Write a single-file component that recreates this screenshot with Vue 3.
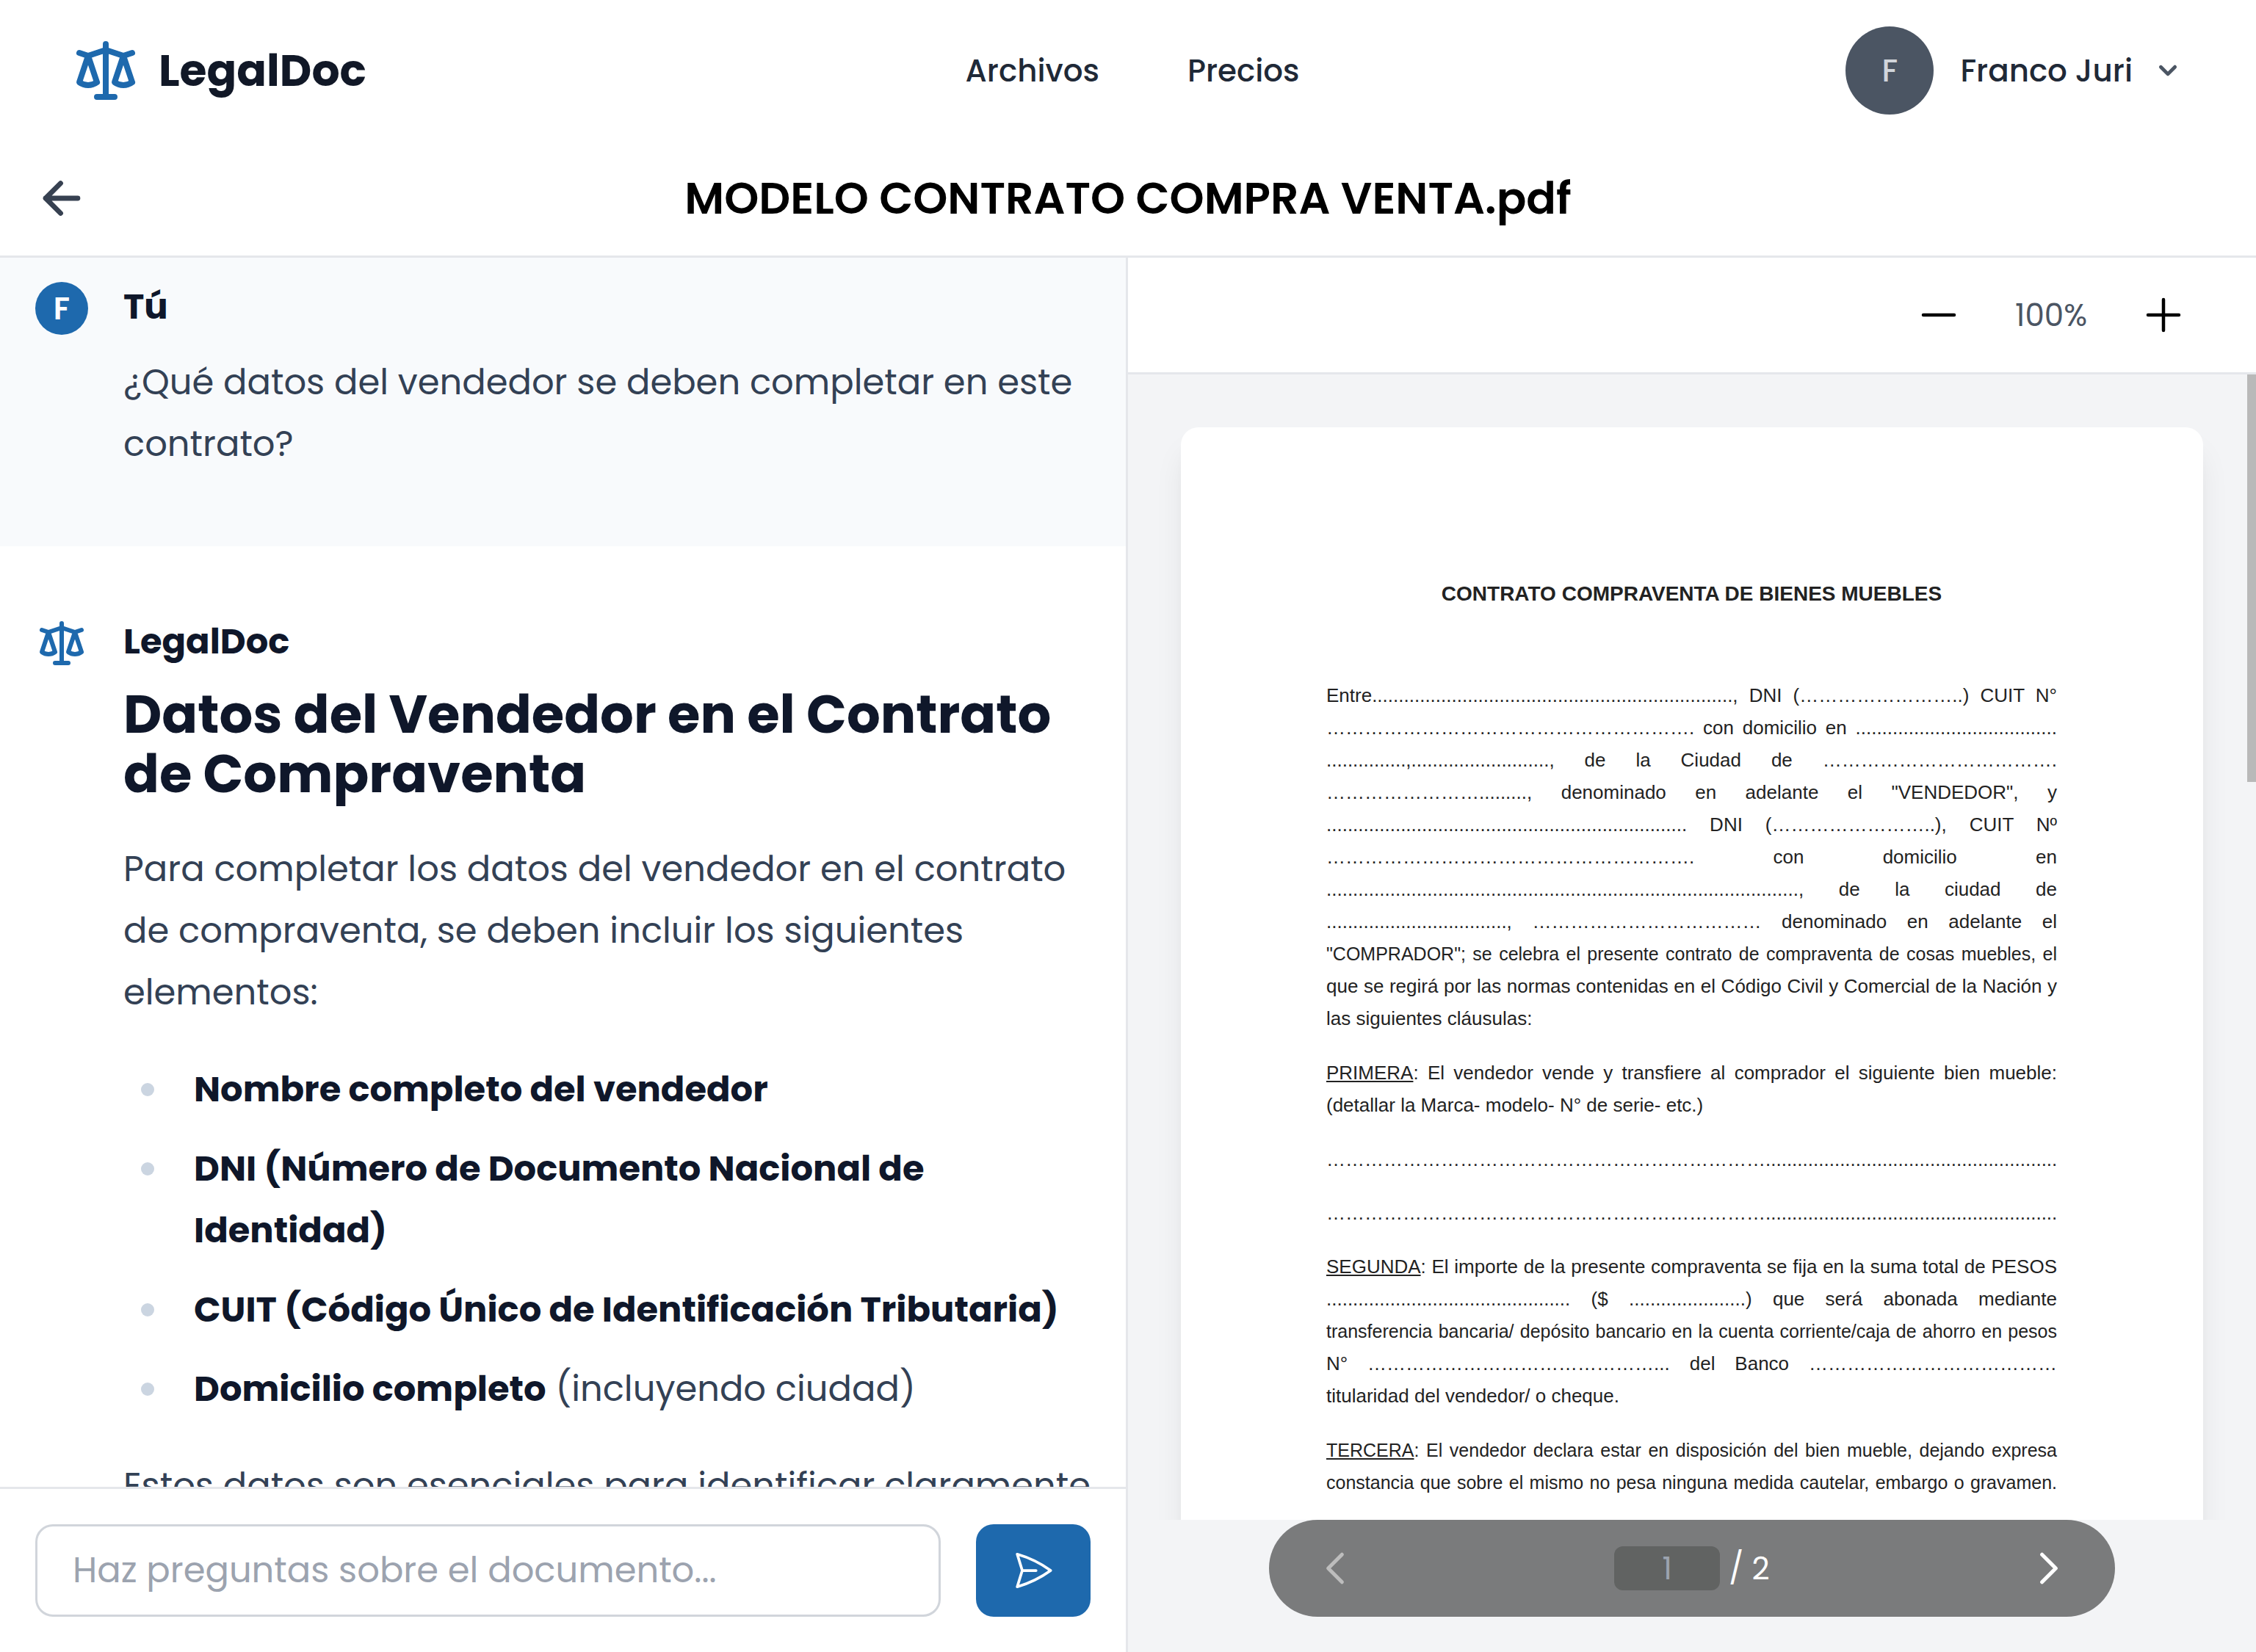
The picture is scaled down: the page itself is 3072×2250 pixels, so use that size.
<script setup>
const dots = (n) => '.'.repeat(n)
const leaders = (n, tail = 0) => '…'.repeat(n) + dots(tail)

const listItems = [
  { strong: 'Nombre completo del vendedor' },
  { strong: 'DNI (Número de Documento Nacional de Identidad)' },
  { strong: 'CUIT (Código Único de Identificación Tributaria)' },
  { strong: 'Domicilio completo', rest: ' (incluyendo ciudad)' },
]

// `tight` marks the lines that fill the whole column and need the smaller size.
const clauses = [
  {
    lines: [
      { text: `Entre${dots(68)}, DNI (${leaders(8, 2)}) CUIT N°` },
      { text: `${leaders(19, 1)} con domicilio en ${dots(38)}` },
      { text: `${dots(15)},${dots(26)}, de la Ciudad de ${leaders(12, 1)}` },
      { text: `${leaders(8, 9)}, denominado en adelante el "VENDEDOR", y` },
      { text: `${dots(68)} DNI (${leaders(8, 2)}), CUIT Nº` },
      { text: `${leaders(19, 1)} con domicilio en` },
      { text: `${dots(89)}, de la ciudad de` },
      { text: `${dots(34)}, ${leaders(12)} denominado en adelante el` },
      { text: '"COMPRADOR"; se celebra el presente contrato de compraventa de cosas muebles, el', tight: true },
      { text: 'que se regirá por las normas contenidas en el Código Civil y Comercial de la Nación y' },
      { text: 'las siguientes cláusulas:' },
    ],
    open: true,
  },
  {
    label: 'PRIMERA',
    lines: [
      { text: ': El vendedor vende y transfiere al comprador el siguiente bien mueble:' },
      { text: '(detallar la Marca- modelo- N° de serie- etc.)' },
    ],
    open: true,
  },
  { lines: [{ text: leaders(23, 55) }], open: true, blank: true },
  { lines: [{ text: leaders(23, 55) }], open: true, blank: true },
  {
    label: 'SEGUNDA',
    lines: [
      { text: ': El importe de la presente compraventa se fija en la suma total de PESOS' },
      { text: `${dots(46)} ($ ${dots(22)}) que será abonada mediante` },
      { text: 'transferencia bancaria/ depósito bancario en la cuenta corriente/caja de ahorro en pesos', tight: true },
      { text: `N° ${leaders(15, 3)} del Banco ${leaders(13)}` },
      { text: 'titularidad del vendedor/ o cheque.' },
    ],
    open: true,
  },
  {
    label: 'TERCERA',
    lines: [
      { text: ': El vendedor declara estar en disposición del bien mueble, dejando expresa', tight: true },
      { text: 'constancia que sobre el mismo no pesa ninguna medida cautelar, embargo o gravamen.', tight: true },
    ],
  },
]

const scalePath =
  'M3 6l3 1m0 0l-3 9a5.002 5.002 0 006.001 0M6 7l3 9M6 7l6-2m6 2l3-1m-3 1l-3 9a5.002 5.002 0 006.001 0M18 7l3 9m-3-9l-6-2m0-2v2m0 16V5m0 16H9m3 0h3'
</script>

<template>
  <div class="app">
    <header class="site-header">
      <a class="brand" href="#">
        <svg class="brand-icon line-icon" viewBox="0 0 24 24" aria-hidden="true"><path :d="scalePath" /></svg>
        <span>LegalDoc</span>
      </a>
      <nav class="site-nav">
        <a href="#archivos">Archivos</a>
        <a href="#precios">Precios</a>
      </nav>
      <button class="account" type="button">
        <span class="account-avatar">F</span>
        <span class="account-name">Franco Juri</span>
        <svg class="account-caret" viewBox="0 0 20 20" aria-hidden="true">
          <path fill-rule="evenodd" d="M5.293 7.293a1 1 0 011.414 0L10 10.586l3.293-3.293a1 1 0 111.414 1.414l-4 4a1 1 0 01-1.414 0l-4-4a1 1 0 010-1.414z" />
        </svg>
      </button>
    </header>

    <div class="title-bar">
      <a class="back" href="#archivos" aria-label="Volver">
        <svg class="line-icon heavy" viewBox="0 0 24 24" aria-hidden="true"><path d="M11.5 5.2L4.7 12l6.8 6.8M4.7 12h14.6" /></svg>
      </a>
      <h1>MODELO CONTRATO COMPRA VENTA.pdf</h1>
    </div>

    <main class="workspace">
      <section class="chat">
        <div class="messages">
          <article class="message message-user">
            <span class="user-badge">F</span>
            <div class="message-body">
              <h2 class="author">Tú</h2>
              <p>¿Qué datos del vendedor se deben completar en este contrato?</p>
            </div>
          </article>
          <article class="message message-bot">
            <svg class="bot-icon line-icon" viewBox="0 0 24 24" aria-hidden="true"><path :d="scalePath" /></svg>
            <div class="message-body">
              <h2 class="author">LegalDoc</h2>
              <h3 class="answer-title">Datos del Vendedor en el Contrato de Compraventa</h3>
              <p>Para completar los datos del vendedor en el contrato de compraventa, se deben incluir los siguientes elementos:</p>
              <ul>
                <li v-for="item in listItems" :key="item.strong"><strong>{{ item.strong }}</strong>{{ item.rest }}</li>
              </ul>
              <p class="closing">Estos datos son esenciales para identificar claramente</p>
            </div>
          </article>
        </div>
        <form class="composer" @submit.prevent>
          <input type="text" aria-label="Pregunta" placeholder="Haz preguntas sobre el documento..." />
          <button type="submit" aria-label="Enviar">
            <svg class="line-icon thin" viewBox="0 0 24 24" aria-hidden="true">
              <path d="M6 12L3.269 3.126A59.768 59.768 0 0121.485 12 59.77 59.77 0 013.27 20.876L5.999 12zm0 0h7.5" />
            </svg>
          </button>
        </form>
      </section>

      <section class="viewer">
        <div class="zoom-bar">
          <button type="button" aria-label="Alejar">
            <svg class="line-icon thin" viewBox="0 0 24 24" aria-hidden="true"><path d="M5 12h14" /></svg>
          </button>
          <span class="zoom-value">100%</span>
          <button type="button" aria-label="Acercar">
            <svg class="line-icon thin" viewBox="0 0 24 24" aria-hidden="true"><path d="M5 12h14M12 5v14" /></svg>
          </button>
        </div>
        <div class="page-scroll">
          <div class="sheet">
            <h2>CONTRATO COMPRAVENTA DE BIENES MUEBLES</h2>
            <p v-for="(clause, c) in clauses" :key="c" :class="{ open: clause.open, blank: clause.blank }">
              <span v-for="(line, i) in clause.lines" :key="i" class="line" :class="{ tight: line.tight }"><u v-if="clause.label && i === 0">{{ clause.label }}</u>{{ line.text }}</span>
            </p>
          </div>
          <div class="scroll-thumb"></div>
        </div>
        <div class="pager">
          <button type="button" aria-label="Página anterior" disabled>
            <svg class="line-icon" viewBox="0 0 24 24" aria-hidden="true"><path d="M15.75 19.5L8.25 12l7.5-7.5" /></svg>
          </button>
          <div class="page-count">
            <input type="text" aria-label="Página" placeholder="1" />
            <span>/ 2</span>
          </div>
          <button type="button" aria-label="Página siguiente">
            <svg class="line-icon" viewBox="0 0 24 24" aria-hidden="true"><path d="M8.25 4.5l7.5 7.5-7.5 7.5" /></svg>
          </button>
        </div>
      </section>
    </main>
  </div>
</template>

<style>
body {
  margin: 0;
  background: #fff;
}
</style>

<style scoped>
.app {
  display: flex;
  flex-direction: column;
  height: 100vh;
  overflow: hidden;
  font-family: Poppins, Inter, sans-serif;
  font-size: 48px;
  color: #334155;
}
.app *,
.app *::before {
  box-sizing: border-box;
}
h1,
h2,
h3,
p,
ul {
  margin: 0;
  padding: 0;
}
a {
  color: inherit;
  text-decoration: none;
}
button {
  display: flex;
  align-items: center;
  justify-content: center;
  margin: 0;
  padding: 0;
  border: 0;
  background: none;
  font: inherit;
  color: inherit;
}
input {
  margin: 0;
  font-family: inherit;
}
svg {
  display: block;
  flex: none;
}
.line-icon {
  fill: none;
  stroke: currentColor;
  stroke-width: 2;
  stroke-linecap: round;
  stroke-linejoin: round;
}
.thin {
  stroke-width: 1.5;
}
.heavy {
  stroke-width: 2.3;
}

.site-header {
  display: grid;
  grid-template-columns: 1fr auto 1fr;
  align-items: center;
  flex: none;
  height: 192px;
  padding: 0 96px;
}
.brand {
  display: flex;
  align-items: center;
  gap: 24px;
  font-size: 60px;
  font-weight: 700;
  color: #111827;
}
.brand-icon {
  width: 96px;
  height: 96px;
  color: #1e69ad;
}
.site-nav {
  display: flex;
  gap: 120px;
  padding-left: 12px;
  font-size: 42px;
  font-weight: 500;
  color: #1f2937;
}
.account {
  justify-self: end;
  font-size: 42px;
  font-weight: 500;
  color: #1f2937;
}
.account-avatar {
  display: flex;
  align-items: center;
  justify-content: center;
  width: 120px;
  height: 120px;
  margin-right: 36px;
  border-radius: 50%;
  background: #4b5563;
  color: #d1d5db;
}
.account-caret {
  width: 48px;
  height: 48px;
  margin-left: 24px;
  fill: #4b5563;
}

.title-bar {
  display: grid;
  grid-template-columns: 72px 1fr 72px;
  align-items: center;
  flex: none;
  height: 159px;
  padding: 0 48px;
  border-bottom: 3px solid #e5e7eb;
}
.back svg {
  width: 72px;
  height: 72px;
  color: #374151;
}
.title-bar h1 {
  font-size: 60px;
  font-weight: 600;
  line-height: 84px;
  text-align: center;
  color: #000;
}

.workspace {
  display: grid;
  grid-template-columns: minmax(0, 1fr) minmax(0, 1fr);
  flex: 1;
  min-height: 0;
}
.chat {
  display: flex;
  flex-direction: column;
  min-height: 0;
  border-right: 3px solid #e5e7eb;
}
.messages {
  flex: 1;
  min-height: 0;
  overflow: hidden;
}
.message {
  display: flex;
  gap: 48px;
  padding: 0 48px;
}
.message-user {
  padding-top: 33px;
  padding-bottom: 97px;
  background: #f8fafc;
}
.message-bot {
  padding-top: 96px;
}
.user-badge {
  display: flex;
  align-items: center;
  justify-content: center;
  flex: none;
  width: 72px;
  height: 72px;
  border-radius: 50%;
  background: #1e69ad;
  color: #fff;
  font-size: 42px;
  font-weight: 600;
}
.bot-icon {
  width: 72px;
  height: 72px;
  color: #1e69ad;
}
.message-body {
  flex: 1;
  min-width: 0;
  line-height: 84px;
}
.author {
  margin-bottom: 27px;
  font-size: 48px;
  font-weight: 700;
  line-height: 68px;
  color: #0f172a;
}
.message-bot .author {
  margin-bottom: 24px;
}
.answer-title {
  margin-bottom: 48px;
  font-size: 72px;
  font-weight: 700;
  line-height: 81px;
  color: #0f172a;
}
ul {
  display: flex;
  flex-direction: column;
  gap: 24px;
  margin: 48px 0;
  list-style: none;
}
li {
  position: relative;
  padding-left: 96px;
}
li::before {
  content: '';
  position: absolute;
  top: 33px;
  left: 24px;
  width: 18px;
  height: 18px;
  border-radius: 50%;
  background: #cbd5e1;
}
strong {
  font-weight: 700;
  color: #0f172a;
}
.closing {
  white-space: nowrap;
}

.composer {
  display: flex;
  gap: 48px;
  flex: none;
  padding: 48px;
  border-top: 3px solid #e5e7eb;
}
.composer input {
  flex: 1;
  min-width: 0;
  height: 126px;
  padding: 0 48px;
  border: 3px solid #d1d5db;
  border-radius: 24px;
  background: #fff;
  font-size: 48px;
}
.composer input::placeholder {
  color: #9ca3af;
}
.composer button {
  width: 156px;
  border-radius: 24px;
  background: #1e69ad;
  color: #fff;
}
.composer svg {
  width: 60px;
  height: 60px;
}

.viewer {
  display: flex;
  flex-direction: column;
  min-height: 0;
  background: #f3f4f6;
}
.zoom-bar {
  display: flex;
  align-items: center;
  justify-content: flex-end;
  flex: none;
  height: 159px;
  padding: 0 90px;
  border-bottom: 3px solid #e5e7eb;
  background: #fff;
  color: #000;
}
.zoom-bar svg {
  width: 72px;
  height: 72px;
}
.zoom-value {
  width: 234px;
  text-align: center;
  font-size: 42px;
  color: #4b5563;
}
.page-scroll {
  position: relative;
  flex: 1;
  min-height: 0;
  padding: 72px 72px 0;
  overflow: hidden;
}
.scroll-thumb {
  position: absolute;
  top: 0;
  right: 0;
  width: 12px;
  height: 555px;
  background: #b9b9b9;
}
.sheet {
  min-height: 100%;
  padding: 205px 199px 120px 198px;
  border-radius: 24px;
  background: #fff;
  box-shadow: 0 30px 45px -9px rgba(0, 0, 0, 0.1), 0 12px 18px -12px rgba(0, 0, 0, 0.1);
  font-family: 'Liberation Sans', Arial, sans-serif;
  font-size: 26px;
  line-height: 44px;
  color: #222;
}
.sheet h2 {
  margin-bottom: 94px;
  font-size: 28px;
  font-weight: 700;
  text-align: center;
  white-space: nowrap;
}
.sheet p {
  margin-bottom: 30px;
}
.sheet .blank {
  margin-bottom: 29px;
}
.line {
  display: block;
  white-space: nowrap;
  text-align: justify;
  text-align-last: justify;
}
.tight {
  font-size: 25px;
}
.open .line:last-child {
  text-align-last: left;
}

.pager {
  display: flex;
  align-items: center;
  justify-content: space-between;
  flex: none;
  height: 132px;
  margin: 0 192px 48px;
  padding: 0 60px;
  border-radius: 66px;
  background: #7a7b7c;
  color: #fff;
  font-size: 42px;
}
.pager svg {
  width: 60px;
  height: 60px;
}
.pager button:disabled {
  color: #bdbdbd;
}
.page-count {
  display: flex;
  align-items: center;
  gap: 12px;
}
.page-count input {
  width: 144px;
  height: 60px;
  padding: 0;
  border: 0;
  border-radius: 12px;
  background: #616362;
  font-size: 42px;
  text-align: center;
}
.page-count input::placeholder {
  color: #9ca3af;
}
</style>
